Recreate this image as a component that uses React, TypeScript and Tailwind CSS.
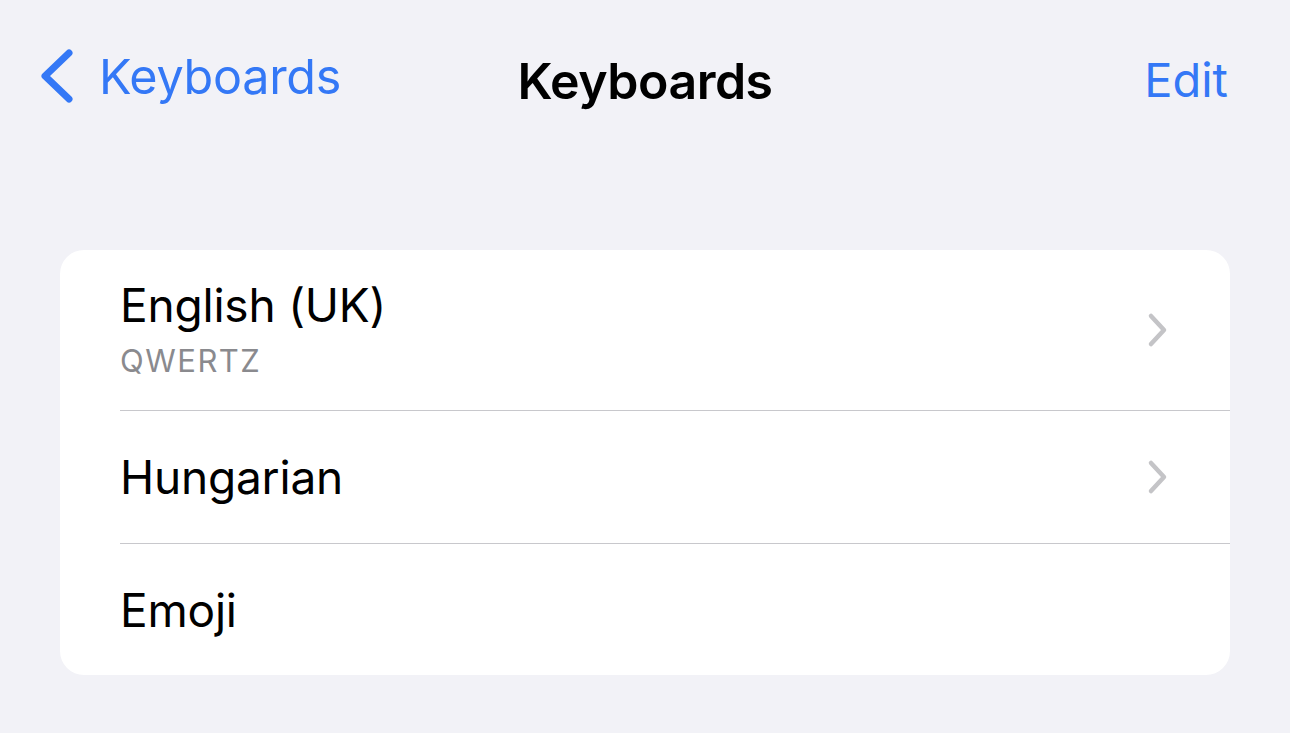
import { ReactNode } from "react";

function Chevron() {
  return (
    <svg width="24" height="36" viewBox="0 0 24 36" fill="none" className="shrink-0">
      <path d="M5 4 L18 18 L5 32" stroke="#c4c4c7" strokeWidth="4.5" strokeLinecap="round" strokeLinejoin="round" />
    </svg>
  );
}

function Row({ children, chevron, last, className }: { children: ReactNode; chevron?: boolean; last?: boolean; className: string }) {
  return (
    <div className={`ml-[60px] flex items-center pr-[60px] ${last ? "" : "border-b border-[#c8c8cc]"} ${className}`}>
      <div className="flex-1">{children}</div>
      {chevron && <Chevron />}
    </div>
  );
}

export default function App() {
  return (
    <div className="min-h-[733px] w-full bg-[#f2f2f7] font-['Inter','Noto_Sans',sans-serif] text-black">
      {/* Nav bar */}
      <div className="flex h-[160px] items-start px-[40px] pt-[48px]">
        <div className="flex flex-1 items-center gap-[25px] text-[#3478f6]">
          <svg width="34" height="56" viewBox="0 0 34 56" fill="none">
            <path d="M29 5 L5 28 L29 51" stroke="#3478f6" strokeWidth="7" strokeLinecap="round" strokeLinejoin="round" />
          </svg>
          <span className="pt-[3px] text-[48.5px] leading-none tracking-[-0.3px]">Keyboards</span>
        </div>
        <div className="pl-[22px] pt-[8px] text-[50px] font-semibold leading-none tracking-[-0.5px]">Keyboards</div>
        <div className="flex flex-1 justify-end pt-[8px] pr-[22px] text-[47px] leading-none text-[#3478f6]">Edit</div>
      </div>

      {/* List */}
      <div className="mx-[60px] mt-[90px] overflow-hidden rounded-[24px] bg-white">
        <Row chevron className="h-[161px]">
          <div className="pb-[3px]">
            <div className="text-[46px] leading-none tracking-[-0.2px]">English (UK)</div>
            <div className="mt-[17px] text-[31px] leading-none tracking-[1.5px] text-[#8a8a8e]">QWERTZ</div>
          </div>
        </Row>
        <Row chevron className="h-[133px]">
          <div className="text-[46px] leading-none tracking-[-0.2px]">Hungarian</div>
        </Row>
        <Row last className="h-[131px]">
          <div className="text-[46px] leading-none tracking-[-0.2px]">Emoji</div>
        </Row>
      </div>
    </div>
  );
}
